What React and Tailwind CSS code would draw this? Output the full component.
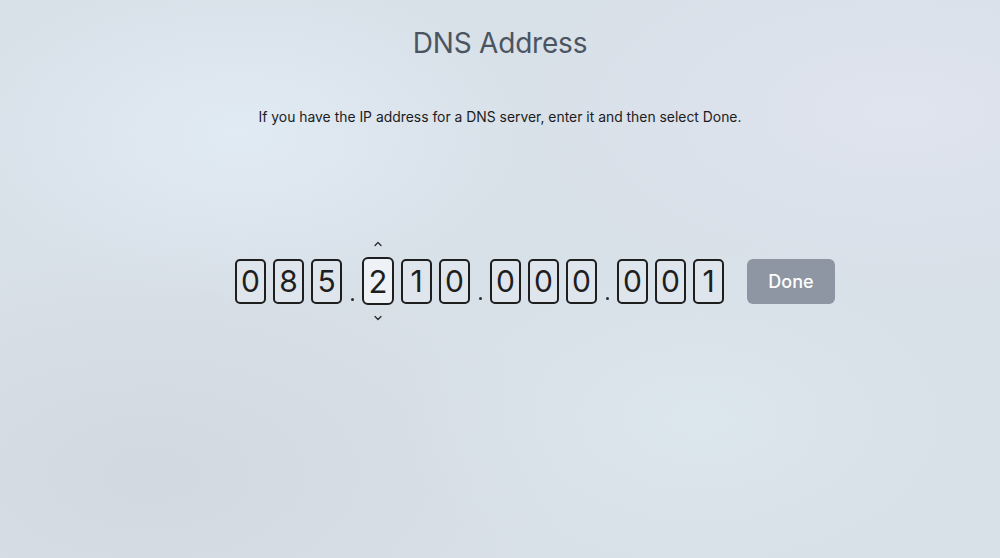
import { ChevronUp, ChevronDown } from 'lucide-react'

const groups = [
  ['0', '8', '5'],
  ['2', '1', '0'],
  ['0', '0', '0'],
  ['0', '0', '1'],
]

// group 1, digit 0 has focus
const ACTIVE = [1, 0]

function DigitBox({ value, active }) {
  if (active) {
    return (
      <div className="relative">
        <ChevronUp size={12} strokeWidth={2.5} className="absolute -top-[19px] left-1/2 -translate-x-1/2 text-[#2a2a2a]" />
        <div className="w-[32px] h-[48px] border-2 border-[#1e1e1e] rounded-[6px] bg-[#eef2f6] flex items-center justify-center text-[31px] text-[#1e1e1e] leading-none">
          {value}
        </div>
        <ChevronDown size={12} strokeWidth={2.5} className="absolute -bottom-[19px] left-1/2 -translate-x-1/2 text-[#2a2a2a]" />
      </div>
    )
  }
  return (
    <div className="w-[31px] h-[45px] border-2 border-[#1e1e1e] rounded-[5px] bg-[#dfe5ec] flex items-center justify-center text-[30px] text-[#1e1e1e] leading-none">
      {value}
    </div>
  )
}

export default function App() {
  return (
    <div
      className="w-full h-[558px] overflow-hidden flex flex-col items-center bg-[#d8e0e8] bg-[radial-gradient(ellipse_at_24%_24%,#e1ebf4_0%,rgba(225,235,244,0)_28%),radial-gradient(ellipse_at_70%_75%,#dce6ed_0%,rgba(220,230,237,0)_30%),radial-gradient(ellipse_at_90%_20%,#dfe4ef_0%,rgba(223,228,239,0)_30%),radial-gradient(ellipse_at_15%_85%,#d3d9e0_0%,rgba(211,217,224,0)_35%)]"
      style={{ fontFamily: 'Inter, "Liberation Sans", sans-serif' }}
    >
      <h1 className="mt-[26px] text-[28px] leading-[34px] text-[#4b5561] tracking-[-0.2px]">DNS Address</h1>
      <p className="mt-[47px] text-[13.9px] leading-[20px] text-[#1c1c1e]">
        If you have the IP address for a DNS server, enter it and then select Done.
      </p>

      <div className="mt-[130px] w-full flex items-center justify-center pl-[70px]">
        <div className="flex items-center">
          {groups.map((g, gi) => (
            <div key={gi} className="flex items-center">
              {gi > 0 && (
                <div className="w-[20px] self-stretch flex items-end justify-center pb-[4px]">
                  <span className="w-[3px] h-[3px] rounded-full bg-[#2a2a2a]" />
                </div>
              )}
              <div className="flex items-center gap-[7px]">
                {g.map((d, di) => (
                  <DigitBox key={di} value={d} active={gi === ACTIVE[0] && di === ACTIVE[1]} />
                ))}
              </div>
            </div>
          ))}
        </div>
        <button className="ml-[23px] w-[88px] h-[45px] rounded-[6px] bg-[#8e96a3] text-white text-[18px] font-medium">
          Done
        </button>
      </div>
    </div>
  )
}
